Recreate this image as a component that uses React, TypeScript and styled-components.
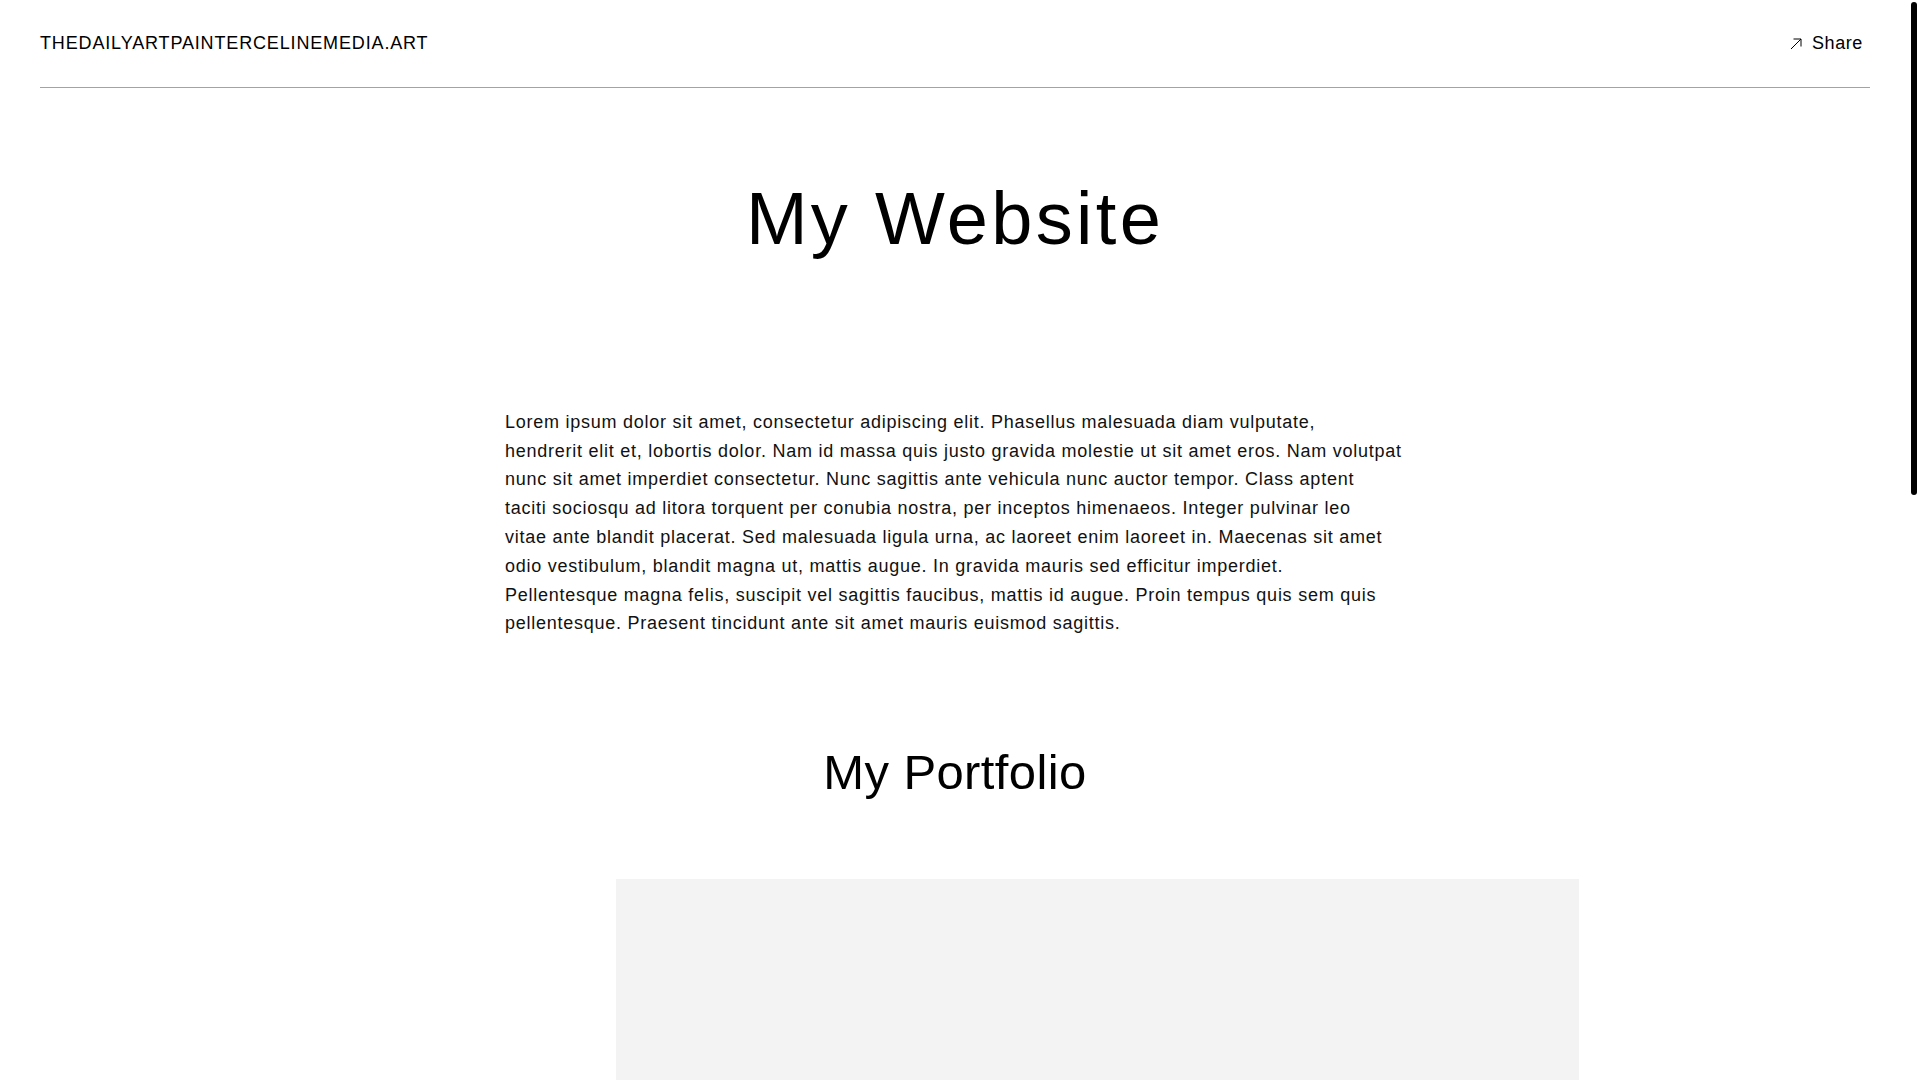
import React from 'react';
import styled, { createGlobalStyle } from 'styled-components';

const GlobalStyle = createGlobalStyle`
  html, body {
    margin: 0;
    padding: 0;
    background: #fff;
    color: #000;
    font-family: "Liberation Sans", Arial, sans-serif;
  }
`;

// thin black scrollbar thumb drawn over the right edge, as in the screenshot
const ScrollThumb = styled.div`
  position: fixed;
  top: 2px;
  right: 3px;
  width: 6px;
  height: 493px;
  border-radius: 3px;
  background: #000;
`;

const Page = styled.div`
  padding: 0 50px 197px 40px;
`;

const Header = styled.header`
  height: 87px;
  display: flex;
  align-items: center;
  justify-content: space-between;
  border-bottom: 1px solid #a3a3a3;
`;

const SiteName = styled.a`
  font-size: 18px;
  letter-spacing: 0.85px;
  color: #000;
  text-decoration: none;
  text-transform: uppercase;
`;

const ShareButton = styled.button`
  display: flex;
  align-items: center;
  gap: 10px;
  margin-right: 7px;
  padding: 0;
  border: 0;
  background: none;
  font-family: inherit;
  font-size: 18px;
  letter-spacing: 0.6px;
  color: #000;
  cursor: pointer;
`;

const Main = styled.main`
  display: flex;
  flex-direction: column;
  align-items: center;
`;

const Title = styled.h1`
  margin: 87px 0 0;
  font-size: 74px;
  font-weight: 400;
  line-height: 1.2;
  letter-spacing: 3.3px;
`;

const Intro = styled.p`
  width: 900px;
  margin: 144px 0 0;
  font-size: 18px;
  line-height: 1.6;
  letter-spacing: 0.75px;
  color: #111;
`;

const IntroLine = styled.span`
  display: block;
  white-space: nowrap;
`;

const SectionTitle = styled.h2`
  margin: 105px 0 0;
  font-size: 49px;
  font-weight: 400;
  line-height: 1.2;
  letter-spacing: 0.4px;
`;

const Gallery = styled.section`
  align-self: stretch;
  display: grid;
  grid-template-columns: 576px 963px 1fr;
  margin-top: 77px;
`;

const Slide = styled.div<{ $col: number }>`
  grid-column: ${(p) => p.$col};
  height: 1280px;
  background: #f3f3f3;
`;

const ArrowIcon = () => (
  <svg width="12" height="12" viewBox="0 0 12 12" fill="none" stroke="#000" strokeWidth="1">
    <path d="M1 11 L11 1" />
    <path d="M3.5 1 H11 V8.5" />
  </svg>
);

const introLines = [
  'Lorem ipsum dolor sit amet, consectetur adipiscing elit. Phasellus malesuada diam vulputate,',
  'hendrerit elit et, lobortis dolor. Nam id massa quis justo gravida molestie ut sit amet eros. Nam volutpat',
  'nunc sit amet imperdiet consectetur. Nunc sagittis ante vehicula nunc auctor tempor. Class aptent',
  'taciti sociosqu ad litora torquent per conubia nostra, per inceptos himenaeos. Integer pulvinar leo',
  'vitae ante blandit placerat. Sed malesuada ligula urna, ac laoreet enim laoreet in. Maecenas sit amet',
  'odio vestibulum, blandit magna ut, mattis augue. In gravida mauris sed efficitur imperdiet.',
  'Pellentesque magna felis, suscipit vel sagittis faucibus, mattis id augue. Proin tempus quis sem quis',
  'pellentesque. Praesent tincidunt ante sit amet mauris euismod sagittis.',
];

export default function App(): JSX.Element {
  return (
    <>
      <GlobalStyle />
      <Page>
        <Header>
          <SiteName href="#">thedailyartpaintercelinemedia.art</SiteName>
          <ShareButton>
            <ArrowIcon />
            Share
          </ShareButton>
        </Header>
        <Main>
          <Title>My Website</Title>
          <Intro>
            {introLines.map((line) => (
              <IntroLine key={line}>{line}</IntroLine>
            ))}
          </Intro>
          <SectionTitle>My Portfolio</SectionTitle>
          <Gallery>
            <Slide $col={2} />
          </Gallery>
        </Main>
      </Page>
      <ScrollThumb />
    </>
  );
}
